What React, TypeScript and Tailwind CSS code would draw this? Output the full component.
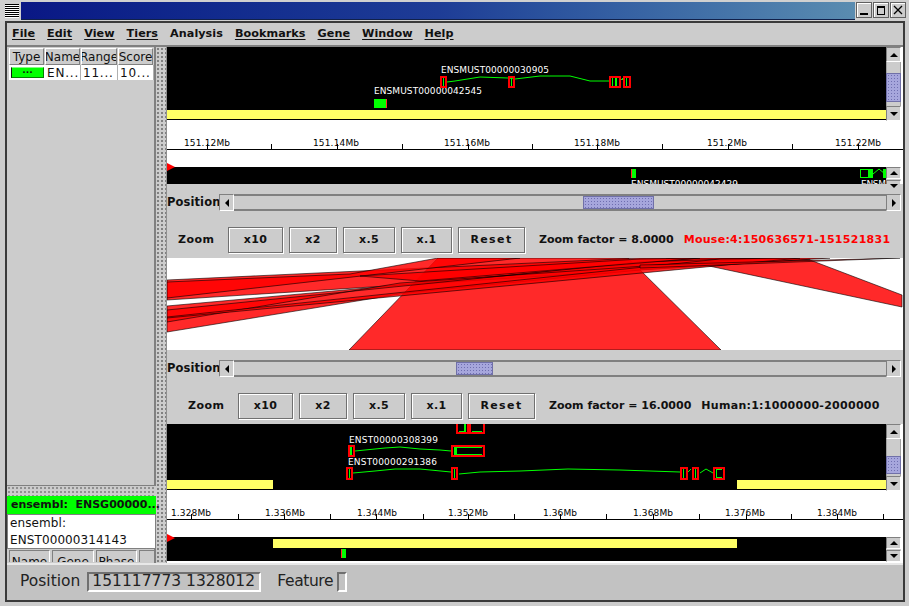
import React from "react";

const dither = "bg-[radial-gradient(circle,#6f6fb0_0.8px,transparent_0.9px)] bg-[length:3px_3px]";

function Arrow({ dir }: { dir: "up" | "down" | "left" | "right" }) {
  const pts = { up: "1,5 5,1 9,5", down: "1,1 5,5 9,1", left: "5,1 1,5 5,9", right: "1,1 5,5 1,9" }[dir];
  return (
    <svg width="10" height="10" viewBox="0 0 10 10" className={dir === "up" || dir === "down" ? "translate-y-[2px]" : "translate-x-[2px]"}>
      <polygon points={pts} fill="#000" />
    </svg>
  );
}

function SBtn({ dir, cls }: { dir: "up" | "down" | "left" | "right"; cls: string }) {
  return (
    <div className={`${cls} shrink-0 flex items-center justify-center bg-[#cccccc] border border-t-[#808080] border-l-[#808080] border-r-white border-b-white`}>
      <Arrow dir={dir} />
    </div>
  );
}

function VScroll({ spacer, thumb }: { spacer: string; thumb: string }) {
  return (
    <div className="w-[15px] shrink-0 flex flex-col bg-[#cccccc]">
      <SBtn dir="up" cls="h-[15px] w-[15px]" />
      <div className={`${spacer} shrink-0 border-x border-[#a0a0a0]`} />
      <div className={`${thumb} shrink-0 bg-[#a6a6dc] border border-[#7070a8] ${dither}`} />
      <div className="flex-1 border-x border-[#a0a0a0]" />
      <SBtn dir="down" cls="h-[15px] w-[15px]" />
    </div>
  );
}

function TinyScroll() {
  return (
    <div className="w-[15px] shrink-0 flex flex-col gap-[1px] bg-[#cccccc]">
      <SBtn dir="up" cls="flex-1" />
      <SBtn dir="down" cls="flex-1" />
    </div>
  );
}

function HScroll({ lead, thumb }: { lead: string; thumb: string }) {
  return (
    <div className="flex items-center h-[17px] pr-[2px]">
      <span className="w-[52px] shrink-0 text-[11.5px] font-bold tracking-[0.1px] text-[#111] whitespace-nowrap">Position</span>
      <SBtn dir="left" cls="w-[15px] h-[17px]" />
      <div className="flex-1 h-[17px] flex border-y-2 border-[#808080]">
        <div className={`${lead} shrink-0`} />
        <div className={`${thumb} shrink-0 bg-[#a6a6dc] border border-[#7070a8] ${dither}`} />
      </div>
      <SBtn dir="right" cls="w-[15px] h-[17px]" />
    </div>
  );
}

function ZBtn({ w, track, children }: { w: string; track: string; children: React.ReactNode }) {
  return (
    <div className={`${w} ${track} h-[26px] shrink-0 flex items-center justify-center text-[11px] font-bold text-[#111] border border-[#707070] shadow-[1px_1px_0_#fff,inset_1px_1px_0_#fff]`}>
      {children}
    </div>
  );
}

function ZoomRow({ pad, factor, loc, locCls }: { pad: string; factor: string; loc: string; locCls: string }) {
  return (
    <div className={`flex items-center mt-[16px] ${pad}`}>
      <span className="w-[50px] shrink-0 text-[11px] font-bold tracking-[0.5px] text-[#111]">Zoom</span>
      <div className="flex gap-[6px]">
        <ZBtn w="w-[55px]" track="tracking-[0.3px]">x10</ZBtn>
        <ZBtn w="w-[48px]" track="tracking-[0.3px]">x2</ZBtn>
        <ZBtn w="w-[52px]" track="tracking-[0.3px]">x.5</ZBtn>
        <ZBtn w="w-[51px]" track="tracking-[0.3px]">x.1</ZBtn>
        <ZBtn w="w-[67px]" track="tracking-[1.4px]">Reset</ZBtn>
      </div>
      <span className="ml-[14px] whitespace-pre text-[11px] font-bold text-[#111]">{factor}</span>
      <span className={`ml-[10px] whitespace-pre text-[11px] font-bold tracking-[0.28px] ${locCls}`}>{loc}</span>
    </div>
  );
}

const labelFont = { fontFamily: "'DejaVu Sans', sans-serif", fontSize: 9 };

function Axis({ ticks, labels }: { ticks: number[]; labels: [number, string, number][] }) {
  return (
    <svg width="736" height="46" className="block shrink-0" viewBox="167 0 736 46">
      <line x1="167" x2="903" y1="28.5" y2="28.5" stroke="#000" />
      {ticks.map((t) => (
        <line key={t} x1={t + 0.5} x2={t + 0.5} y1="23" y2="28" stroke="#000" />
      ))}
      {labels.map(([x, s, w]) => (
        <text key={s} x={x} y="25" textAnchor="middle" textLength={w} lengthAdjust="spacing" style={labelFont} fill="#000">
          {s}
        </text>
      ))}
    </svg>
  );
}

function Gene({ x, w, y, h, bars }: { x: number; w: number; y: number; h: number; bars: [number, number][] }) {
  return (
    <g>
      {bars.map(([bx, bw]) => (
        <rect key={bx} x={bx} y={y} width={bw} height={h} fill="#00ff00" />
      ))}
      <rect x={x + 1} y={y + 1} width={w - 2} height={h - 2} fill="none" stroke="#ff0000" strokeWidth="2" />
    </g>
  );
}

function TierLabel({ x, y, w, s }: { x: number; y: number; w: number; s: string }) {
  return (
    <text x={x} y={y} textLength={w} lengthAdjust="spacing" style={labelFont} fill="#fff">
      {s}
    </text>
  );
}

function TopTier() {
  return (
    <svg width="719" height="74" viewBox="167 47 719 74" className="block" shapeRendering="crispEdges">
      <rect x="167" y="47" width="719" height="73" fill="#000" />
      <rect x="167" y="110" width="719" height="9" fill="#ffff66" />
      <TierLabel x={441} y={73} w={108} s="ENSMUST00000030905" />
      <TierLabel x={374} y={94} w={108} s="ENSMUST00000042545" />
      <polyline points="447,82 455,81 480,77 508,78 515,79 540,76 570,76 590,81 609,81" fill="none" stroke="#00ff00" shapeRendering="auto" />
      <Gene x={440} w={7} y={76} h={12} bars={[[443, 1]]} />
      <Gene x={508} w={7} y={76} h={12} bars={[[511, 1]]} />
      <Gene x={609} w={12} y={76} h={12} bars={[[612, 1], [615, 2]]} />
      <polyline points="621,80 624,78" stroke="#00ff00" fill="none" />
      <Gene x={623} w={8} y={76} h={12} bars={[[626, 1]]} />
      <rect x="374" y="99" width="12" height="9" fill="#00ff00" />
      <rect x="386" y="99" width="1" height="9" fill="#ff3030" />
    </svg>
  );
}

function SmallTierTop() {
  return (
    <svg width="719" height="17" viewBox="167 167 719 17" className="block overflow-visible">
      <rect x="167" y="167" width="719" height="17" fill="#000" />
      <polygon points="167,163 167,171 175,167" fill="#ff0000" />
      <rect x="631" y="169" width="1" height="9" fill="#ff3030" />
      <rect x="632" y="169" width="4" height="9" fill="#00ff00" />
      <svg x="167" y="167" width="719" height="17" viewBox="167 167 719 17">
        <text x="631" y="187" textLength={107} lengthAdjust="spacing" style={labelFont} fill="#fff">ENSMUST00000042429</text>
        <text x="861" y="187" textLength={25} lengthAdjust="spacing" style={labelFont} fill="#fff">ENSM</text>
      </svg>
      <rect x="860.5" y="169.5" width="9" height="8" fill="none" stroke="#00ff00" />
      <rect x="868" y="169" width="5" height="9" fill="#00ff00" />
      <polyline points="873,174 879,169 885,174" fill="none" stroke="#00ff00" />
      <rect x="883" y="169" width="3" height="9" fill="#00ff00" />
    </svg>
  );
}

const polys = [
  "349,350 438,258 628,258 721,350",
  "666,258 810,260 902,295 902,307 709,266",
  "167,280 640,258 810,259 167,300",
  "167,282 350,274 438,258 520,258 167,298",
  "167,306 700,258 830,258 705,266 640,270 406,293 167,332",
  "167,310 640,262 760,258 400,283 167,322",
  "167,317 720,259 800,258 167,318",
  "360,276 640,259 700,258 420,281",
  "640,265 900,258 640,268",
];

function Synteny() {
  return (
    <svg width="736" height="92" viewBox="167 258 736 92" className="block shrink-0 bg-white">
      {polys.map((p) => (
        <polygon key={p} points={p} fill="#ff0000" fillOpacity="0.84" stroke="#000" strokeOpacity="0.75" strokeWidth="0.8" />
      ))}
    </svg>
  );
}

function BottomTier() {
  return (
    <svg width="719" height="66" viewBox="167 424 719 66" className="block" shapeRendering="crispEdges">
      <rect x="167" y="424" width="719" height="66" fill="#000" />
      <rect x="167" y="480" width="106" height="9" fill="#ffff66" />
      <rect x="737" y="480" width="149" height="9" fill="#ffff66" />
      <Gene x={456} w={13} y={422} h={12} bars={[[464, 2]]} />
      <rect x="459" y="431" width="5" height="1" fill="#00ff00" />
      <Gene x={469} w={16} y={422} h={12} bars={[]} />
      <rect x="472" y="431" width="10" height="1" fill="#00ff00" />
      <TierLabel x={349} y={443} w={89} s="ENST00000308399" />
      <TierLabel x={348} y={465} w={89} s="ENST00000291386" />
      <polyline points="355,451 365,450 385,448 400,447 420,449 440,450 451,451" fill="none" stroke="#00ff00" shapeRendering="auto" />
      <Gene x={348} w={7} y={445} h={12} bars={[[350, 2]]} />
      <Gene x={451} w={34} y={445} h={12} bars={[[454, 3]]} />
      <rect x="457" y="447" width="25" height="1" fill="#00ff00" />
      <rect x="457" y="454" width="25" height="1" fill="#00ff00" />
      <polyline points="353,473 375,471 395,469 420,469 451,472" fill="none" stroke="#00ff00" shapeRendering="auto" />
      <polyline points="459,474 480,472 520,471 568,469 620,470 680,472" fill="none" stroke="#00ff00" shapeRendering="auto" />
      <Gene x={346} w={7} y={467} h={13} bars={[[349, 1]]} />
      <Gene x={451} w={7} y={467} h={13} bars={[[454, 1]]} />
      <Gene x={680} w={8} y={467} h={13} bars={[[683, 1]]} />
      <polyline points="688,472 691,469" fill="none" stroke="#00ff00" />
      <Gene x={692} w={7} y={467} h={13} bars={[[695, 1]]} />
      <polyline points="700,473 706,469 713,473" fill="none" stroke="#00ff00" shapeRendering="auto" />
      <Gene x={713} w={12} y={467} h={13} bars={[[716, 1]]} />
      <rect x="716" y="469" width="6" height="1" fill="#00ff00" />
      <rect x="716" y="477" width="6" height="1" fill="#00ff00" />
    </svg>
  );
}

function SmallTierBottom() {
  return (
    <svg width="719" height="24" viewBox="167 537 719 24" className="block overflow-visible">
      <rect x="167" y="537" width="719" height="24" fill="#000" />
      <polygon points="167,534 167,542 175,538" fill="#ff0000" />
      <rect x="273" y="539" width="464" height="9" fill="#ffff66" />
      <rect x="341" y="549" width="1" height="9" fill="#ff3030" />
      <rect x="342" y="549" width="4" height="9" fill="#00ff00" />
      <svg x="167" y="537" width="719" height="24" viewBox="167 537 719 24">
        <text x="342" y="568" textLength={89} lengthAdjust="spacing" style={labelFont} fill="#fff">ENST00000291386</text>
      </svg>
    </svg>
  );
}

function TableHead({ w, children }: { w: string; children: React.ReactNode }) {
  return (
    <div className={`${w} h-[17px] shrink-0 flex items-center justify-center border border-t-white border-l-white border-r-[#808080] border-b-[#808080] whitespace-nowrap overflow-hidden`}>
      {children}
    </div>
  );
}

function ClipHead({ w, children }: { w: string; children: React.ReactNode }) {
  return (
    <div className={`${w} h-[24px] shrink-0 flex items-center justify-center border border-t-[#808080] border-l-[#808080] border-r-white whitespace-nowrap overflow-hidden`}>
      {children}
    </div>
  );
}

function TableCell({ w, children }: { w: string; children: React.ReactNode }) {
  return <div className={`${w} h-[15px] shrink-0 bg-white border-r border-[#b0b0b0] pl-[2px] flex items-center tracking-[0.8px] overflow-hidden whitespace-nowrap`}>{children}</div>;
}

export default function App() {
  const topTicks = [207, 271, 337, 402, 468, 532, 597, 662, 728, 792, 858];
  const topLabels: [number, string, number][] = [
    [207, "151.12Mb", 46],
    [336, "151.14Mb", 46],
    [467, "151.16Mb", 46],
    [597, "151.18Mb", 46],
    [727, "151.2Mb", 40],
    [858, "151.22Mb", 46],
  ];
  const botTicks = [191, 238, 284, 330, 376, 423, 468, 514, 560, 606, 653, 699, 746, 791, 837, 883];
  const botLabels: [number, string, number][] = [
    [191, "1.328Mb", 40],
    [285, "1.336Mb", 40],
    [377, "1.344Mb", 40],
    [468, "1.352Mb", 40],
    [560, "1.36Mb", 34],
    [653, "1.368Mb", 40],
    [745, "1.376Mb", 40],
    [837, "1.384Mb", 40],
  ];

  return (
    <div className="w-[909px] h-[606px] overflow-hidden flex flex-col bg-[#cccccc] text-[#111] font-['DejaVu_Sans',sans-serif]">
      <div className="h-[21px] shrink-0 flex items-stretch bg-[#d0d0d0] pt-[2px] pl-[3px] pr-[3px]">
        <div className="w-[18px] h-[18px] shrink-0 bg-[repeating-linear-gradient(#000_0,#000_1px,#fff_1px,#fff_2px)] border-2 border-[#d0d0d0]" />
        <div className="flex-1 h-[18px] bg-gradient-to-r from-[#0a1785] via-[#1e3c96] to-[#5a8cb0] border-b border-[#10204a]" />
        <div className="flex gap-[1px] pl-[1px]">
          {["min", "max", "close"].map((k) => (
            <div key={k} className="w-[16px] h-[16px] flex items-center justify-center bg-[#cccccc] border border-[#606060] shadow-[inset_1px_1px_0_#fff]">
              <svg width="12" height="12" viewBox="0 0 12 12">
                {k === "min" && <rect x="2" y="9" width="8" height="2" fill="#000" />}
                {k === "max" && <path d="M2 2.5h8M2 3.5h8M2.5 2v8.5h7V2M2 10.5h8" stroke="#000" fill="none" />}
                {k === "close" && <path d="M2 2l8 8M10 2l-8 8" stroke="#000" strokeWidth="1.3" fill="none" />}
              </svg>
            </div>
          ))}
        </div>
      </div>

      <div className="w-[900px] h-[581px] ml-[5px] shrink-0 flex flex-col border-2 border-[#3a3a3a]">
        <div className="h-[24px] shrink-0 flex items-center gap-[12px] pl-[5px] border-b-2 border-[#808080] text-[11.2px] font-bold tracking-[0.05px]">
          <span className="underline underline-offset-2">File</span>
          <span className="underline underline-offset-2">Edit</span>
          <span className="underline underline-offset-2">View</span>
          <span className="underline underline-offset-2">Tiers</span>
          <span>Analysis</span>
          <span className="underline underline-offset-2">Bookmarks</span>
          <span className="underline underline-offset-2">Gene</span>
          <span className="underline underline-offset-2">Window</span>
          <span className="underline underline-offset-2">Help</span>
        </div>

        <div className="flex-1 flex min-h-0">
          <div className="w-[149px] shrink-0 flex flex-col">
            <div className="h-[439px] shrink-0 border-r-2 border-b border-[#808080] pt-[1px] pl-[2px] text-[12px]">
              <div className="flex gap-[1px]">
                <TableHead w="w-[35px]">Type</TableHead>
                <TableHead w="w-[35px]">Name</TableHead>
                <TableHead w="w-[36px]">Range</TableHead>
                <TableHead w="w-[35px]">Score</TableHead>
              </div>
              <div className="flex">
                <div className="w-[36px] h-[15px] shrink-0 bg-white p-[2px] pr-[1px]">
                  <div className="h-[11px] bg-[#00ff00] border border-t-[#80ff80] border-b-[#008000] border-r-[#008000] flex items-center justify-center text-[9px] font-bold leading-none pb-[4px]">...</div>
                </div>
                <TableCell w="w-[36px]">EN...</TableCell>
                <TableCell w="w-[37px]">11...</TableCell>
                <TableCell w="w-[36px]">10...</TableCell>
              </div>
            </div>
            <div className="h-[10px] shrink-0 bg-[radial-gradient(circle,#909090_0.8px,transparent_0.9px)] bg-[length:4px_4px]" />
            <div className="h-[18px] shrink-0 bg-[#00ff00] pl-[4px] flex items-center whitespace-pre text-[11px] font-bold">ensembl:  ENSG00000...</div>
            <div className="h-[35px] shrink-0 bg-white border border-[#808080] pl-[2px] text-[12px] leading-[17px] tracking-[0.1px]">
              <div>ensembl:</div>
              <div>ENST00000314143</div>
            </div>
            <div className="flex-1 min-h-0 pt-[1px] pl-[2px] text-[12px] border-r-2 border-[#808080]">
              <div className="flex gap-[2px] h-[12px] overflow-hidden">
                <ClipHead w="w-[41px]">Name</ClipHead>
                <ClipHead w="w-[42px]">Gene</ClipHead>
                <ClipHead w="w-[41px]">Phase</ClipHead>
                <ClipHead w="w-[16px]"> </ClipHead>
              </div>
            </div>
          </div>

          <div className="w-[11px] shrink-0 bg-[radial-gradient(circle,#808080_0.9px,transparent_1px)] bg-[length:4px_4px] border-r border-[#909090]" />

          <div className="w-[736px] shrink-0 flex flex-col bg-white">
            <div className="h-[74px] shrink-0 flex">
              <TopTier />
              <VScroll spacer="h-[11px]" thumb="h-[29px]" />
            </div>
            <Axis ticks={topTicks} labels={topLabels} />
            <div className="h-[17px] shrink-0 flex">
              <SmallTierTop />
              <TinyScroll />
            </div>
            <div className="h-[74px] shrink-0 bg-[#cccccc] pt-[10px] overflow-hidden">
              <HScroll lead="w-[349px]" thumb="w-[71px]" />
              <ZoomRow pad="pl-[11px]" factor="Zoom factor = 8.0000" loc="Mouse:4:150636571-151521831" locCls="text-[#ff0000]" />
            </div>
            <Synteny />
            <div className="h-[74px] shrink-0 bg-[#cccccc] pt-[10px] overflow-hidden">
              <HScroll lead="w-[222px]" thumb="w-[37px]" />
              <ZoomRow pad="pl-[21px]" factor="Zoom factor = 16.0000" loc="Human:1:1000000-2000000" locCls="text-[#111]" />
            </div>
            <div className="h-[67px] shrink-0 flex">
              <BottomTier />
              <VScroll spacer="h-[17px]" thumb="h-[18px]" />
            </div>
            <Axis ticks={botTicks} labels={botLabels} />
            <div className="h-[24px] shrink-0 flex">
              <SmallTierBottom />
              <TinyScroll />
            </div>
          </div>
        </div>

        <div className="h-[37px] shrink-0 flex items-center pl-[13px] bg-[#c2c2c2] bg-[radial-gradient(circle,#a8a8cc_0.6px,transparent_0.7px)] bg-[length:6px_6px] text-[15.5px] font-normal text-[#222] border-t-2 border-[#e8e8e8] pb-[2px]">
          <span>Position</span>
          <div className="ml-[7px] w-[174px] h-[20px] flex items-center pl-[3px] border-2 border-t-[#707070] border-l-[#707070] border-r-white border-b-white whitespace-nowrap overflow-hidden">151117773 1328012</div>
          <span className="ml-[16px] tracking-[-0.4px]">Feature</span>
          <div className="ml-[4px] w-[10px] h-[20px] border-2 border-t-[#707070] border-l-[#707070] border-r-white border-b-white" />
        </div>
      </div>
    </div>
  );
}
